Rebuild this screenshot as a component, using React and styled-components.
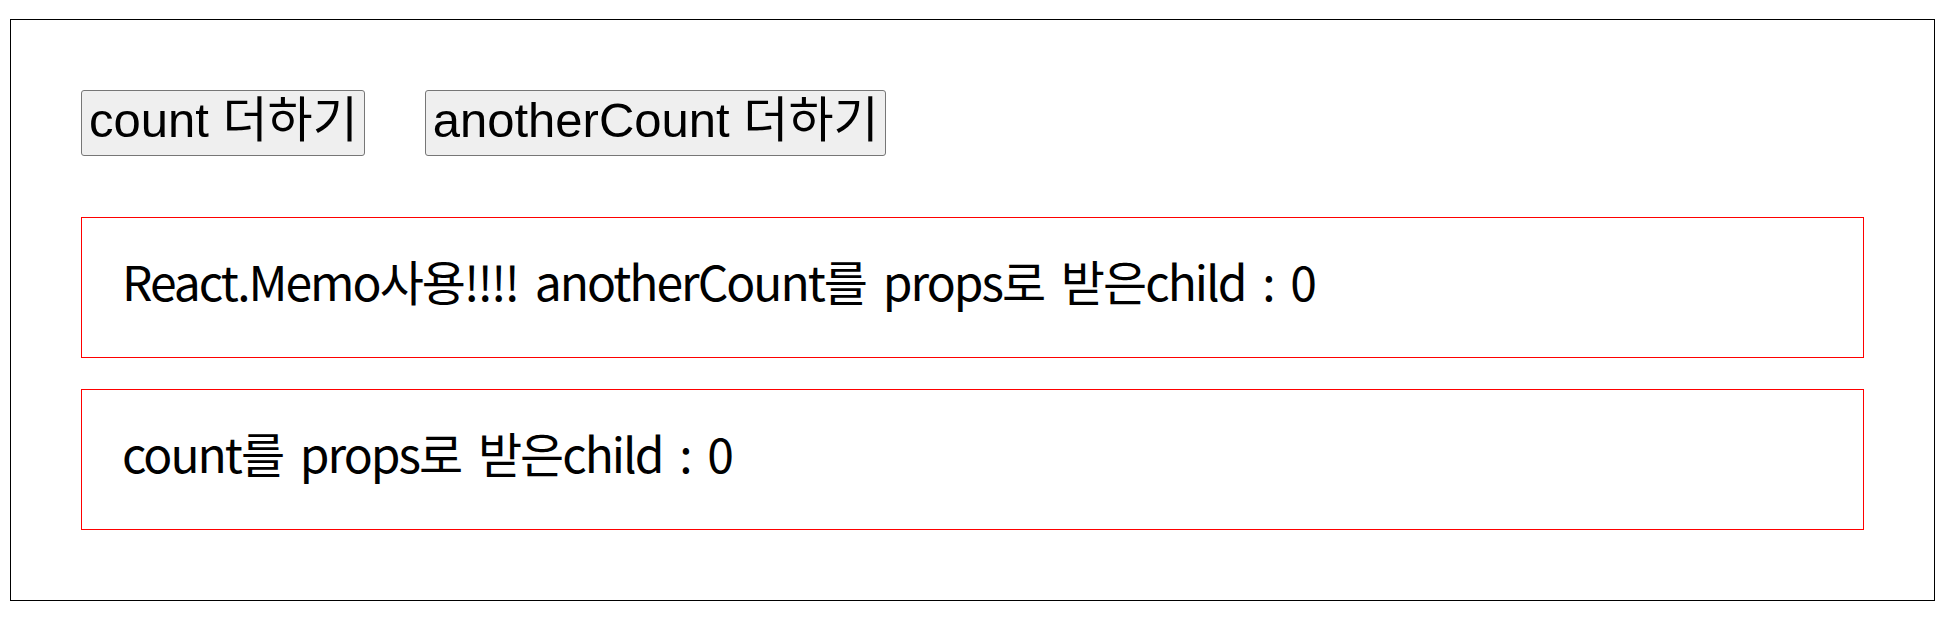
import React, { useState, memo } from "react";
import styled, { createGlobalStyle } from "styled-components";

const GlobalStyle = createGlobalStyle`
  html, body {
    margin: 0;
    padding: 0;
    background: #ffffff;
  }
  body {
    font-family: "Noto Sans CJK KR", "Noto Sans", sans-serif;
    color: #000000;
  }
`;

const Frame = styled.div`
  margin: 19px 19px 0 10px;
  border: 1px solid #000000;
  padding: 70px;
  display: flex;
  flex-direction: column;
`;

const ButtonRow = styled.div`
  display: flex;
  align-items: flex-start;
  gap: 60px;
  margin-bottom: 61px;
`;

const CounterButton = styled.button`
  box-sizing: border-box;
  height: 66px;
  padding: 0 6px 12px 7px;
  margin: 0;
  background: #efefef;
  border: 1px solid #767676;
  border-radius: 3px;
  color: #000000;
  font-family: "Liberation Sans", Arial, "Noto Sans CJK KR", sans-serif;
  font-size: 49px;
  line-height: 1;
  white-space: nowrap;
  cursor: default;
`;

const Hangul = styled.span`
  font-family: "Noto Sans CJK KR", sans-serif;
`;

const BoxStack = styled.div`
  display: flex;
  flex-direction: column;
  gap: 31px;
`;

const ChildBox = styled.div`
  box-sizing: border-box;
  height: 141px;
  border: 1px solid #ff0000;
  padding: 38px 40px 0;
  font-family: "Noto Sans CJK KR", sans-serif;
  font-size: 48px;
  line-height: 48px;
  letter-spacing: -2px;
  word-spacing: 8px;
  white-space: nowrap;
`;

const MemoChild = memo(function MemoChild({ anotherCount }) {
  return (
    <ChildBox>
      React.Memo사용!!!! anotherCount를 props로 받은child : {anotherCount}
    </ChildBox>
  );
});

function CountChild({ count }) {
  return <ChildBox>count를 props로 받은child : {count}</ChildBox>;
}

export default function App() {
  const [count, setCount] = useState(0);
  const [anotherCount, setAnotherCount] = useState(0);

  return (
    <>
      <GlobalStyle />
      <Frame>
        <ButtonRow>
          <CounterButton onClick={() => setCount((c) => c + 1)}>
            count <Hangul>더하기</Hangul>
          </CounterButton>
          <CounterButton onClick={() => setAnotherCount((c) => c + 1)}>
            anotherCount <Hangul>더하기</Hangul>
          </CounterButton>
        </ButtonRow>
        <BoxStack>
          <MemoChild anotherCount={anotherCount} />
          <CountChild count={count} />
        </BoxStack>
      </Frame>
    </>
  );
}
